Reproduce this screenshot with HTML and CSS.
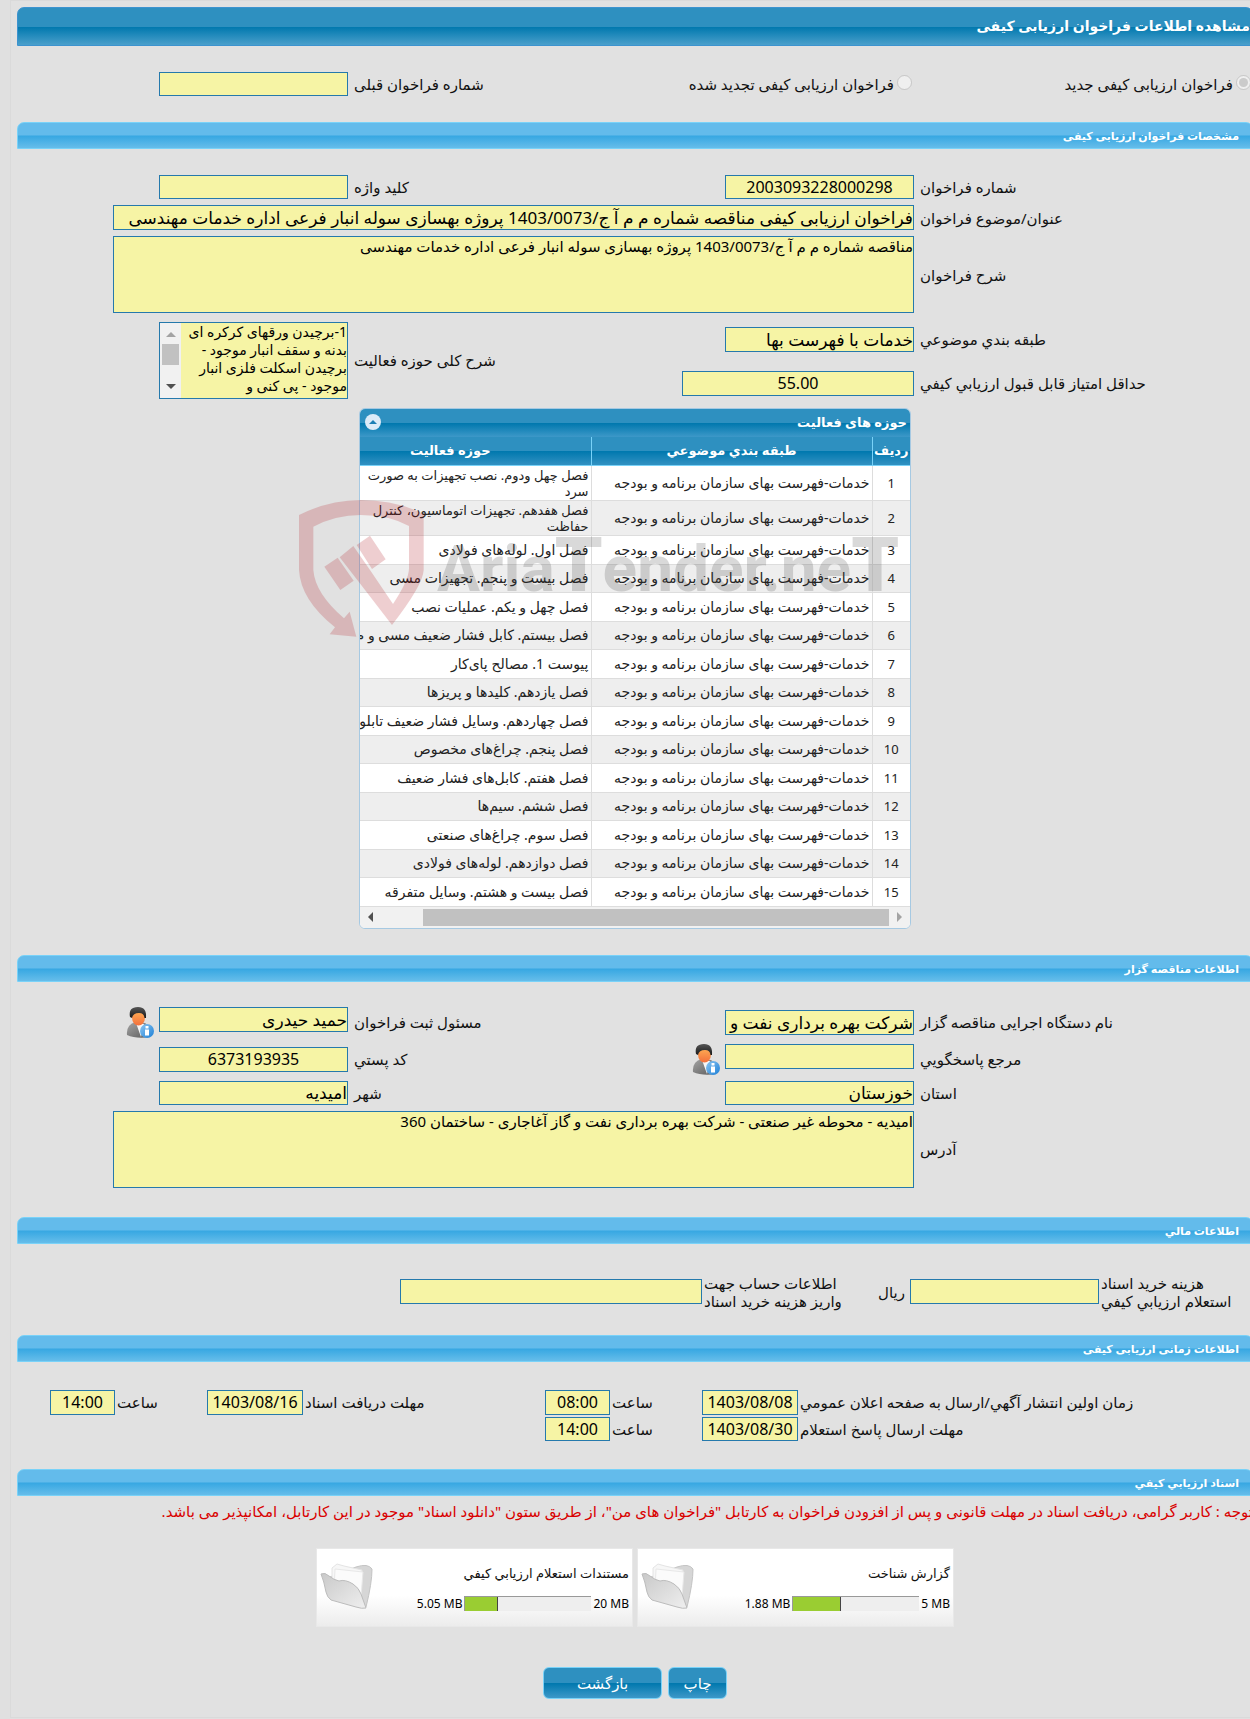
FILE: index.html
```html
<!DOCTYPE html>
<html lang="fa" dir="rtl">
<head>
  <meta charset="UTF-8">
  <meta name="viewport" content="width=device-width, initial-scale=1.0">
  <title>مشاهده اطلاعات فراخوان ارزیابی کیفی</title>
  <link rel="stylesheet" href="styles.css">
</head>
<body>
  <!-- shared icons -->
  <svg class="defs" width="0" height="0">
    <defs>
      <linearGradient id="gHair" x1="0" y1="0" x2="0" y2="1"><stop offset="0" stop-color="#555"/><stop offset="1" stop-color="#1a1a1a"/></linearGradient>
      <linearGradient id="gFace" x1="0" y1="0" x2="0" y2="1"><stop offset="0" stop-color="#ffb457"/><stop offset="1" stop-color="#f4703c"/></linearGradient>
      <linearGradient id="gSuit" x1="0" y1="0" x2="1" y2="1"><stop offset="0" stop-color="#a5a5a5"/><stop offset="1" stop-color="#5a5a5a"/></linearGradient>
      <linearGradient id="gInfo" x1="0" y1="0" x2="1" y2="1"><stop offset="0" stop-color="#8cc6f2"/><stop offset="1" stop-color="#1c7fd6"/></linearGradient>
      <linearGradient id="gFolder" x1="0" y1="0" x2="1" y2="1"><stop offset="0" stop-color="#c9c9c9"/><stop offset="1" stop-color="#efefef"/></linearGradient>
    </defs>
    <symbol id="person" viewBox="0 0 28 31">
      <path d="M1 28 Q0 18 9 15 L19 16 Q25 19 24 30 Q10 32 1 28Z" fill="url(#gSuit)"/>
      <path d="M10 16 L15 30 L18 17Z" fill="#f6f6f6"/>
      <ellipse cx="12.500" cy="10.500" rx="6.500" ry="8" fill="url(#gFace)"/>
      <path d="M4 10 Q2 0 12 0 Q21 0 20 11 L18.500 11 Q18 6 13 6 Q7 6 6 11Z" fill="url(#gHair)"/>
      <circle cx="21" cy="24" r="7" fill="url(#gInfo)"/>
      <path d="M19.500 19h3v2.500h-3z M19 22.500h4v6h-4z" fill="#fff"/>
    </symbol>
    <symbol id="folder" viewBox="0 0 54 48">
      <path d="M36 4 Q48 0 52 6 Q52 20 46 44 L20 36 L10 14Z" fill="#d6d6d6" stroke="#c4c4c4"/>
      <path d="M12 5 L17 1 L24 3 L42 7 L40 32 L12 24Z" fill="#f7f7f7" stroke="#e4e4e4"/>
      <path d="M15 6 L43 9 L41 34 L14 26Z" fill="#fbfbfb" stroke="#e8e8e8"/>
      <path d="M1 11 Q5 9 9 13 Q14 17 19 18 Q25 16 33 21 Q39 25 41 31 L46 45 Q42 46 36 44 L11 37 Q7 34 6 29 Q4 18 1 11Z" fill="url(#gFolder)" stroke="#bcbcbc"/>
    </symbol>
  </svg>

  <main class="page">
    <h1 class="title-bar">مشاهده اطلاعات فراخوان ارزیابی کیفی</h1>
    <form>
      <div class="form-grid">
        <div class="radio-cell"><input type="radio" id="typeNew" name="callType" checked disabled><label for="typeNew">فراخوان ارزیابی کیفی جدید</label></div>
        <div class="radio-cell"><input type="radio" id="typeRenew" name="callType" disabled><label for="typeRenew">فراخوان ارزیابی کیفی تجدید شده</label></div>
        <label class="lbl" for="prevNumber">شماره فراخوان قبلی</label>
        <input class="field short" type="text" id="prevNumber" readonly>
      </div>

      <h2 class="section-bar">مشخصات فراخوان ارزیابی کیفی</h2>
      <div class="form-grid specs">
        <label class="lbl" for="callNumber">شماره فراخوان</label>
        <input class="field short num" type="text" id="callNumber" value="2003093228000298" readonly>
        <label class="lbl" for="keyword">کلید واژه</label>
        <input class="field short" type="text" id="keyword" readonly>

        <label class="lbl" for="callTitle">عنوان/موضوع فراخوان</label>
        <input class="field wide" type="text" id="callTitle" value="فراخوان ارزیابی کیفی مناقصه شماره م م آ ج/1403/0073 پروژه بهسازی سوله انبار فرعی اداره خدمات مهندسی" readonly>

        <label class="lbl" for="callDesc">شرح فراخوان</label>
        <textarea class="field wide area" id="callDesc" readonly>مناقصه شماره م م آ ج/1403/0073 پروژه بهسازی سوله انبار فرعی اداره خدمات مهندسی</textarea>

        <label class="lbl" for="category">طبقه بندي موضوعي</label>
        <input class="field" type="text" id="category" value="خدمات با فهرست بها" readonly>
        <label class="lbl scope-label" for="scope">شرح کلی حوزه فعالیت</label>
        <div class="scroll-field">
          <textarea class="scroll-text" id="scope" readonly>1-برچیدن ورقهای کرکره ای
بدنه و سقف انبار موجود -
برچیدن اسکلت فلزی انبار
موجود - پی کنی و</textarea>
          <div class="v-scroll"><span class="arrow up"></span><span class="v-thumb"></span><span class="arrow down"></span></div>
        </div>

        <label class="lbl" for="minScore">حداقل امتیاز قابل قبول ارزيابي کيفي</label>
        <input class="field score num" type="text" id="minScore" value="55.00" readonly>
      </div>

      <div class="grid-panel">
        <div class="panel-inner">
          <div class="panel-title">
            <span>حوزه های فعالیت</span>
            <button type="button" class="collapse" aria-label="بستن"><span class="arrow collapse-arrow"></span></button>
          </div>
          <table class="data-table">
            <thead>
              <tr><th class="c-row">ردیف</th><th class="c-cat">طبقه بندي موضوعي</th><th>حوزه فعالیت</th></tr>
            </thead>
            <tbody>
              <tr class="tall"><td>1</td><td>خدمات-فهرست بهای سازمان برنامه و بودجه</td><td>فصل چهل ودوم. نصب تجهیزات به صورت<br>سرد</td></tr>
              <tr class="tall"><td>2</td><td>خدمات-فهرست بهای سازمان برنامه و بودجه</td><td>فصل هفدهم. تجهیزات اتوماسیون، کنترل<br>حفاظت</td></tr>
              <tr><td>3</td><td>خدمات-فهرست بهای سازمان برنامه و بودجه</td><td>فصل اول. لوله‌های فولادی</td></tr>
              <tr><td>4</td><td>خدمات-فهرست بهای سازمان برنامه و بودجه</td><td>فصل بیست و پنجم. تجهیزات مسی</td></tr>
              <tr><td>5</td><td>خدمات-فهرست بهای سازمان برنامه و بودجه</td><td>فصل چهل و یکم. عملیات نصب</td></tr>
              <tr><td>6</td><td>خدمات-فهرست بهای سازمان برنامه و بودجه</td><td>فصل بیستم. کابل فشار ضعیف مسی و م</td></tr>
              <tr><td>7</td><td>خدمات-فهرست بهای سازمان برنامه و بودجه</td><td>پیوست 1. مصالح پای‌کار</td></tr>
              <tr><td>8</td><td>خدمات-فهرست بهای سازمان برنامه و بودجه</td><td>فصل یازدهم. کلیدها و پریزها</td></tr>
              <tr><td>9</td><td>خدمات-فهرست بهای سازمان برنامه و بودجه</td><td>فصل چهاردهم. وسایل فشار ضعیف تابلویی</td></tr>
              <tr><td>10</td><td>خدمات-فهرست بهای سازمان برنامه و بودجه</td><td>فصل پنجم. چراغ‌های مخصوص</td></tr>
              <tr><td>11</td><td>خدمات-فهرست بهای سازمان برنامه و بودجه</td><td>فصل هفتم. کابل‌های فشار ضعیف</td></tr>
              <tr><td>12</td><td>خدمات-فهرست بهای سازمان برنامه و بودجه</td><td>فصل ششم. سیم‌ها</td></tr>
              <tr><td>13</td><td>خدمات-فهرست بهای سازمان برنامه و بودجه</td><td>فصل سوم. چراغ‌های صنعتی</td></tr>
              <tr><td>14</td><td>خدمات-فهرست بهای سازمان برنامه و بودجه</td><td>فصل دوازدهم. لوله‌های فولادی</td></tr>
              <tr><td>15</td><td>خدمات-فهرست بهای سازمان برنامه و بودجه</td><td>فصل بیست و هشتم. وسایل متفرقه</td></tr>
            </tbody>
          </table>
          <div class="h-scroll"><span class="arrow right"></span><span class="h-thumb"></span><span class="arrow left"></span></div>
        </div>
        <div class="watermark">
          <svg width="180" height="160" viewBox="0 0 540 480">
            <path fill="#b0121a" d="M30 75 Q120 30 215 30 Q320 30 404 72 V240 Q402 285 309 405 L205 270 L152 202 L193 168 L243 240 L312 342 Q360 270 360 235 V108 Q300 75 215 75 Q140 75 73 110 V240 Q78 310 165 385 L182 365 L202 440 L122 433 L138 412 Q35 330 30 240Z M106 230 L146 203 L194 272 L154 300Z M203 165 L243 137 L290 208 L249 237Z"/>
          </svg>
          <span class="mark-text">Aria<b>T</b>ender.ne<b>T</b></span>
        </div>
      </div>

      <h2 class="section-bar">اطلاعات مناقصه گزار</h2>
      <div class="form-grid owner">
        <label class="lbl" for="orgName">نام دستگاه اجرایی مناقصه گزار</label>
        <input class="field" type="text" id="orgName" value="شرکت بهره برداری نفت و گاز آغاجاری" readonly>
        <label class="lbl" for="registrar">مسئول ثبت فراخوان</label>
        <div class="with-icon"><input class="field" type="text" id="registrar" value="حمید حیدری" readonly><svg width="28" height="31"><use href="#person"/></svg></div>

        <label class="lbl" for="responder">مرجع پاسخگويي</label>
        <div class="with-icon"><input class="field" type="text" id="responder" readonly><svg width="28" height="31"><use href="#person"/></svg></div>
        <label class="lbl" for="postCode">کد پستي</label>
        <input class="field num" type="text" id="postCode" value="6373193935" readonly>

        <label class="lbl" for="province">استان</label>
        <input class="field short" type="text" id="province" value="خوزستان" readonly>
        <label class="lbl" for="city">شهر</label>
        <input class="field short" type="text" id="city" value="امیدیه" readonly>

        <label class="lbl" for="address">آدرس</label>
        <textarea class="field wide area" id="address" readonly>امیدیه - محوطه غیر صنعتی - شرکت بهره برداری نفت و گاز آغاجاری - ساختمان 360</textarea>
      </div>

      <h2 class="section-bar">اطلاعات مالي</h2>
      <div class="finance">
        <label class="fin-label" for="docCost">هزینه خرید اسناد<br>استعلام ارزيابي کيفي</label>
        <input class="field" type="text" id="docCost" readonly>
        <span class="unit">ریال</span>
        <label class="fin-label second" for="account">اطلاعات حساب جهت<br>واریز هزینه خرید اسناد</label>
        <input class="field account" type="text" id="account" readonly>
      </div>

      <h2 class="section-bar">اطلاعات زمانی ارزیابی کیفی</h2>
      <div class="time-grid">
        <label for="pubDate">زمان اولین انتشار آگهي/ارسال به صفحه اعلان عمومي</label>
        <input class="field date num" type="text" id="pubDate" value="1403/08/08" readonly>
        <label for="pubHour">ساعت</label>
        <input class="field hour num" type="text" id="pubHour" value="08:00" readonly>
        <label for="getDate">مهلت دریافت اسناد</label>
        <input class="field date num" type="text" id="getDate" value="1403/08/16" readonly>
        <label for="getHour">ساعت</label>
        <input class="field hour num" type="text" id="getHour" value="14:00" readonly>

        <label for="replyDate">مهلت ارسال پاسخ استعلام</label>
        <input class="field short date num" type="text" id="replyDate" value="1403/08/30" readonly>
        <label for="replyHour">ساعت</label>
        <input class="field short hour num" type="text" id="replyHour" value="14:00" readonly>
      </div>

      <h2 class="section-bar">اسناد ارزيابي کيفي</h2>
      <p class="notice">توجه : کاربر گرامی، دریافت اسناد در مهلت قانونی و پس از افزودن فراخوان به کارتابل "فراخوان های من"، از طریق ستون "دانلود اسناد" موجود در این کارتابل، امکانپذیر می باشد.</p>

      <div class="files">
        <div class="file-card">
          <svg width="54" height="48"><use href="#folder"/></svg>
          <div class="file-info">
            <div class="file-name">گزارش شناخت</div>
            <div class="file-size"><span>1.88 MB</span><div class="bar"><div class="bar-fill" style="width: 38%"></div></div><span>5 MB</span></div>
          </div>
        </div>
        <div class="file-card">
          <svg width="54" height="48"><use href="#folder"/></svg>
          <div class="file-info">
            <div class="file-name">مستندات استعلام ارزيابي کيفي</div>
            <div class="file-size"><span>5.05 MB</span><div class="bar"><div class="bar-fill" style="width: 26%"></div></div><span>20 MB</span></div>
          </div>
        </div>
      </div>

      <div class="actions">
        <button type="button" class="btn">چاپ</button>
        <button type="button" class="btn back">بازگشت</button>
      </div>
    </form>
  </main>
</body>
</html>
```
FILE: styles.css
```css
* {
  box-sizing: border-box;
}

body {
  margin: 0;
  background-color: #e0e0e0;
  color: #111;
  font-family: Tahoma, "Noto Sans", "DejaVu Sans", sans-serif;
  font-size: 15px;
  line-height: 18px;
  overflow-x: hidden;
}

.defs {
  position: absolute;
}

/* runs a little past the right edge of the window */
.page {
  margin: 0 -3px 0 10px;
  padding: 6px 0 18px 6px;
  border: 1px solid #dadada;
  border-right: 0;
  background-color: #e1e1e1;
}

.title-bar {
  margin: 0;
  height: 39px;
  padding-right: 2px;
  border: 1px solid #3c93cf;
  border-radius: 7px 7px 0 0;
  background: linear-gradient(#2e90c0 0, #2e90c0 50%, #0078ae 51%, #4a9fcb 100%);
  color: #fff;
  font-size: 14px;
  line-height: 36px;
}

.section-bar {
  margin: 0;
  height: 27px;
  padding-right: 13px;
  border: 1px solid #79d2f8;
  border-radius: 7px 7px 0 0;
  background: linear-gradient(#63bbeb 0, #63bbeb 49%, #36a7e2 51%, #66bdea 100%);
  color: #fff;
  font-size: 11px;
  line-height: 26px;
}

/* form rows */
.form-grid {
  display: grid;
  grid-template-columns: 339fr 300fr 266fr 331fr;
  row-gap: 6px;
  align-items: center;
  padding: 26px 0;
}

.form-grid.specs {
  grid-template-rows: 24px 25px 77px 40px 36px;
  padding-bottom: 7px;
}

.form-grid.owner {
  padding: 25px 0 29px;
}

.lbl {
  padding-left: 6px;
  text-align: left;
  white-space: nowrap;
}

.radio-cell {
  display: flex;
  align-items: center;
  padding-right: 2px;
  white-space: nowrap;
}

.radio-cell input {
  width: 15px;
  height: 15px;
  margin: 0 0 4px 3px;
}

.field {
  width: 189px;
  height: 25px;
  margin: 0;
  padding: 0;
  border: 1px solid #2579ac;
  border-radius: 0;
  background-color: #f6f4a5;
  color: #000;
  font-family: inherit;
  font-size: 17px;
  outline: none;
}

.short {
  height: 24px;
}

.num {
  font-size: 16px;
  text-align: center;
}

.score {
  width: 232px;
}

.wide {
  grid-column: 2 / 5;
  width: calc(100% - 96px);
}

.area {
  display: block;
  height: 77px;
  font-size: 15px;
  line-height: 18px;
  resize: none;
}

.scope-label {
  grid-area: 4 / 3 / 6 / 4;
}

.scroll-field {
  grid-area: 4 / 4 / 6 / 5;
  display: flex;
  width: 189px;
  height: 77px;
  border: 1px solid #2579ac;
  background-color: #f6f4a5;
}

.scroll-text {
  flex: 1;
  min-width: 0;
  padding: 0;
  border: 0;
  background: none;
  color: #000;
  font-family: inherit;
  font-size: 14px;
  line-height: 18px;
  white-space: pre;
  overflow: hidden;
  resize: none;
}

.v-scroll {
  display: flex;
  flex-direction: column;
  align-items: center;
  width: 21px;
  padding: 9px 0;
  background-color: #f1f1f1;
}

.v-thumb {
  width: 17px;
  height: 21px;
  margin: 7px 0 auto;
  background-color: #c1c1c1;
}

.arrow {
  width: 0;
  height: 0;
  border: 5px solid transparent;
}

.up {
  border-top: 0;
  border-bottom-color: #a3a3a3;
}

.down {
  border-bottom: 0;
  border-top-color: #505050;
}

.right {
  border-right: 0;
  border-left-color: #a3a3a3;
}

.left {
  border-left: 0;
  border-right-color: #505050;
}

.with-icon {
  display: flex;
  align-items: flex-start;
  gap: 5px;
}

/* activity table */
.grid-panel {
  position: relative;
  width: 552px;
  margin: 0 auto 26px;
}

.panel-inner {
  border: 1px solid #a6c9e2;
  border-radius: 6px;
  background-color: #fff;
  overflow: hidden;
}

.panel-title {
  display: flex;
  align-items: center;
  justify-content: space-between;
  height: 28px;
  padding: 0 3px 2px 5px;
  background: linear-gradient(#2e90c0 0, #2e90c0 49%, #0078ae 51%, #3d98c8 100%);
  color: #fff;
  font-size: 13px;
  font-weight: bold;
}

.collapse {
  display: flex;
  align-items: center;
  justify-content: center;
  width: 16px;
  height: 16px;
  padding: 0;
  border: 0;
  border-radius: 8px;
  background-color: #dcebf8;
}

.collapse-arrow {
  border-width: 4px;
  border-top: 0;
  border-bottom-color: #1c7fb5;
}

.data-table {
  width: 100%;
  table-layout: fixed;
  border-collapse: collapse;
  font-size: 14px;
  line-height: 16px;
}

.data-table th {
  height: 28px;
  padding: 0 0 2px;
  border-left: 1px solid #79d2f8;
  border-bottom: 1px solid #79d2f8;
  background: linear-gradient(#2e90c0 0, #2e90c0 49%, #0078ae 51%, #3291c2 100%);
  color: #fff;
  font-size: 13px;
  white-space: nowrap;
}

.data-table th:last-child {
  padding-right: 50px;
}

.data-table th:last-child,
.data-table td:last-child {
  border-left: 0;
}

.c-row {
  width: 38px;
}

.c-cat {
  width: 281px;
}

.data-table td {
  height: 29px;
  padding: 0 2px;
  border-left: 1px solid #ddd;
  border-bottom: 1px solid #ddd;
  color: #222;
  white-space: nowrap;
  overflow: hidden;
}

.data-table td:first-child {
  font-size: 13px;
  text-align: center;
}

.data-table tr:nth-child(even) td {
  height: 28px;
  background-color: #eee;
}

.data-table tr.tall td {
  height: 35px;
}

.data-table tr.tall td:last-child {
  font-size: 13px;
}

.h-scroll {
  display: flex;
  align-items: center;
  height: 21px;
  padding: 0 8px;
  background-color: #f1f1f1;
}

.h-thumb {
  width: 466px;
  height: 17px;
  margin: 0 8px 0 auto;
  background-color: #c1c1c1;
}

.watermark {
  position: absolute;
  top: 82px;
  left: -70px;
  display: flex;
  direction: ltr;
  opacity: 0.2;
  pointer-events: none;
}

.mark-text {
  margin-left: -32px;
  color: #444;
  font-family: Roboto, sans-serif;
  font-size: 64px;
  font-weight: bold;
  line-height: 150px;
}

.mark-text b {
  font-size: 76px;
}

/* finance and time rows */
.finance {
  display: flex;
  align-items: center;
  gap: 2px;
  padding: 30px 0 25px;
}

.fin-label {
  flex: 0 0 152px;
  text-align: left;
  white-space: nowrap;
}

.second {
  flex-basis: 173px;
}

.unit {
  width: 29px;
  padding-right: 3px;
}

.account {
  width: 302px;
}

.time-grid {
  display: grid;
  grid-template-columns: 453fr 100fr 88fr 69fr 238fr 100fr 88fr 100fr;
  row-gap: 2px;
  align-items: center;
  padding: 28px 0;
}

.time-grid label {
  text-align: left;
  white-space: nowrap;
}

.time-grid .field {
  margin-right: 2px;
}

.date {
  width: 96px;
}

.hour {
  width: 65px;
}

.notice {
  margin: 0 0 22px;
  color: #d90000;
  line-height: 30px;
  white-space: nowrap;
}

/* attached files */
.files {
  display: flex;
  justify-content: center;
  gap: 4px;
}

.file-card {
  display: flex;
  flex-direction: row-reverse;
  align-items: center;
  justify-content: space-between;
  width: 317px;
  height: 79px;
  padding: 0 3px;
  border: 1px solid #e8e8e8;
  background: linear-gradient(#fff 60%, #ececec);
}

.file-name {
  margin-bottom: 14px;
  font-size: 13px;
}

.file-size {
  display: flex;
  gap: 2px;
  direction: ltr;
  color: #000;
  font-size: 12px;
  line-height: 15px;
}

.bar {
  width: 127px;
  height: 15px;
  border-top: 1px solid #999;
  border-left: 1px solid #999;
  background-color: #eee;
}

.bar-fill {
  height: 100%;
  border-right: 1px solid #444;
  background-color: #9acd32;
}

.actions {
  display: flex;
  justify-content: center;
  gap: 6px;
  margin-top: 40px;
}

.btn {
  width: 59px;
  height: 32px;
  padding: 0;
  border: 1px solid #79d2f8;
  border-radius: 6px;
  background: linear-gradient(#2e90c0 0, #2e90c0 49%, #0078ae 51%, #3d98c8 100%);
  color: #fff;
  font-family: inherit;
  font-size: 15px;
}

.back {
  width: 119px;
}
```
